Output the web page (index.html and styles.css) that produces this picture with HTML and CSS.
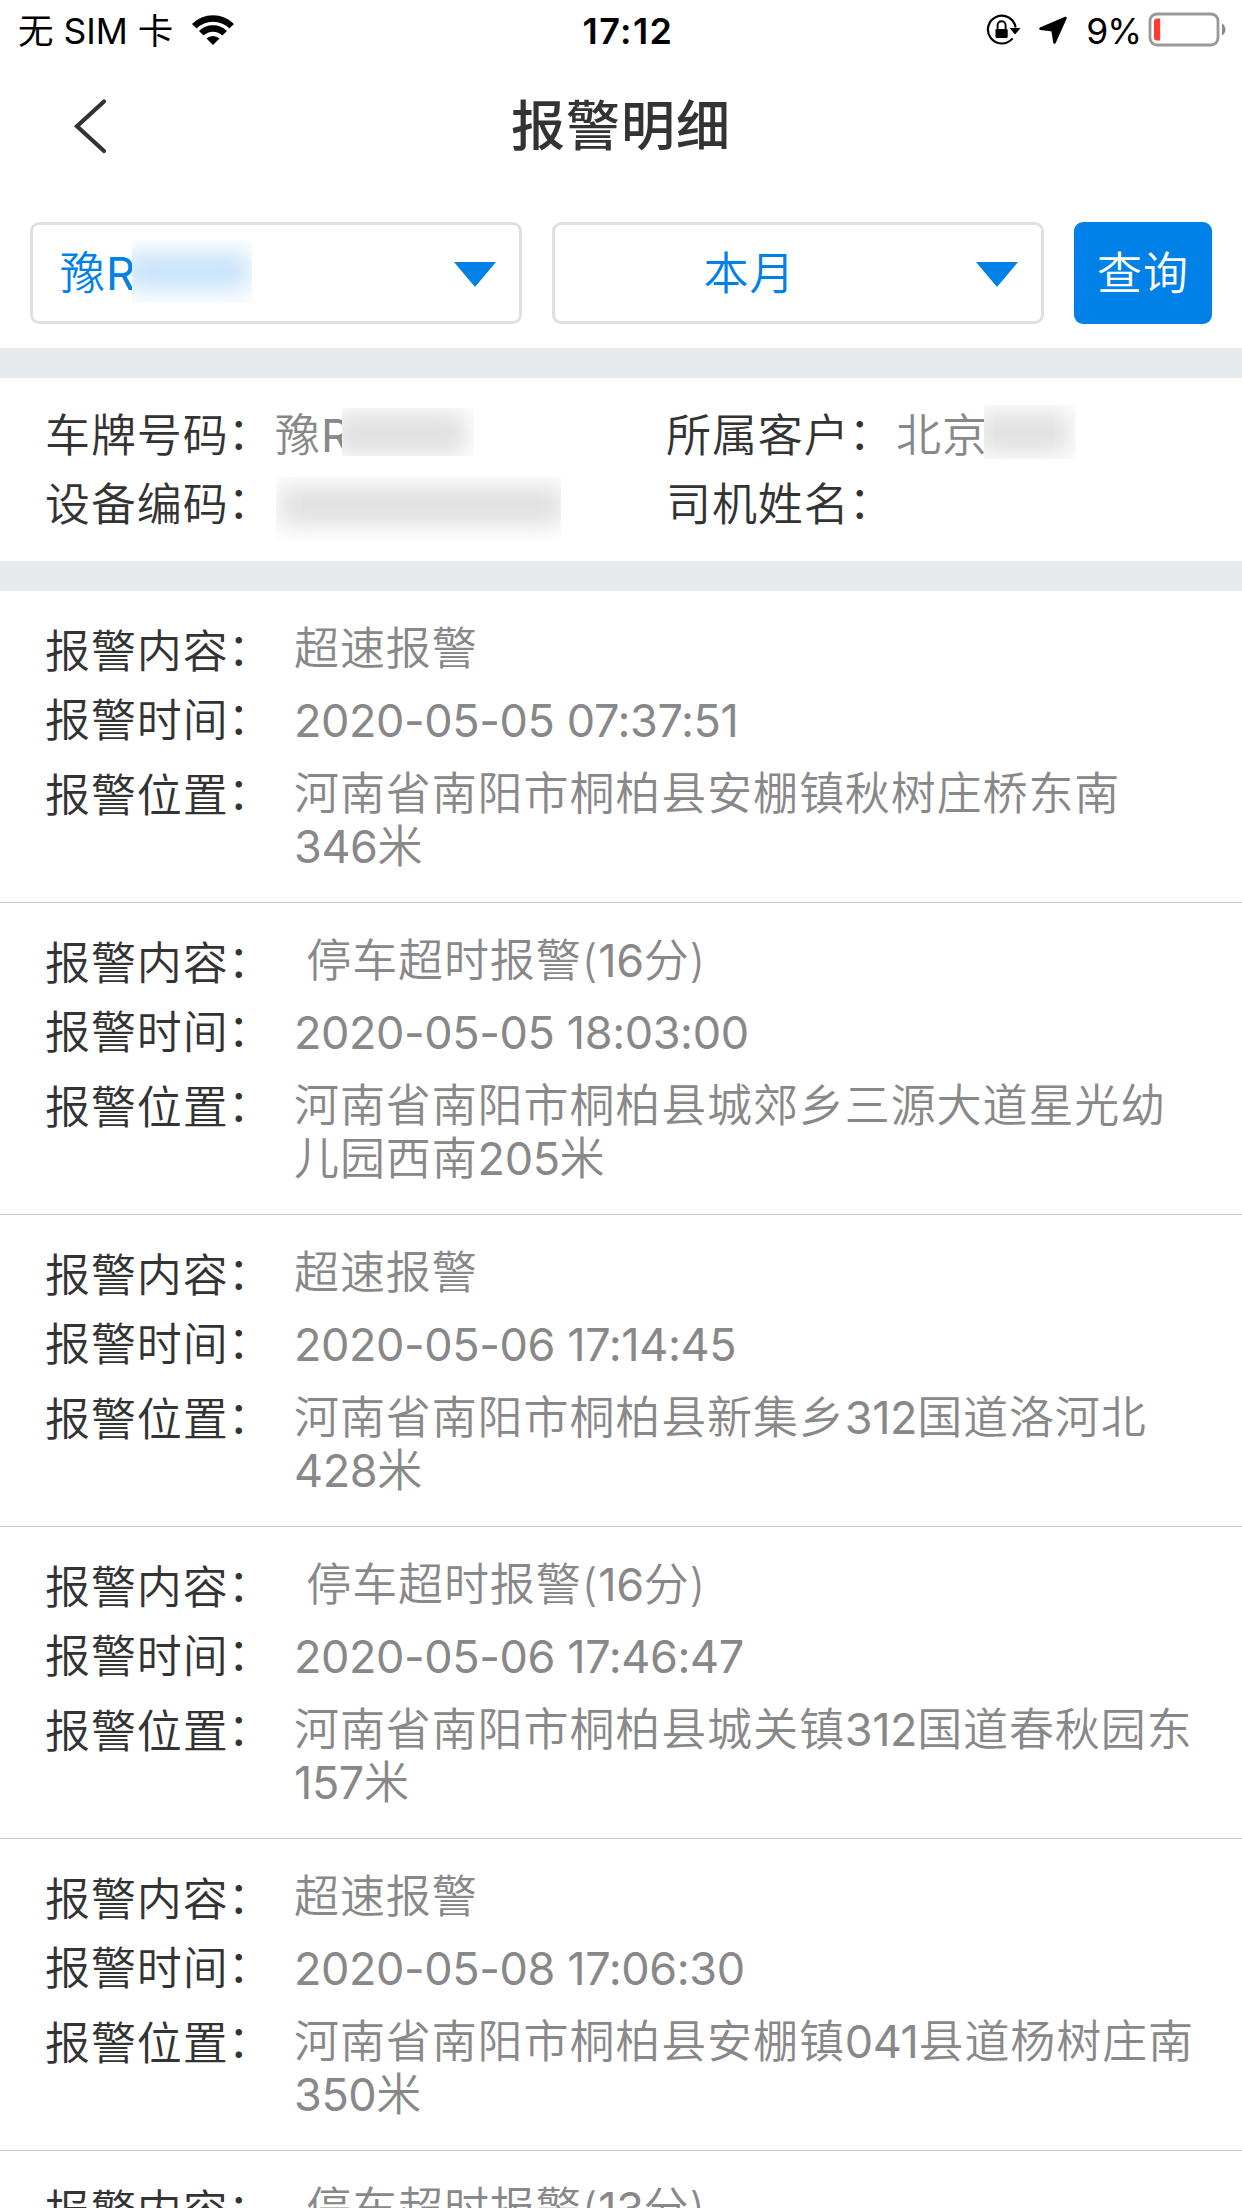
FILE: index.html
```html
<!DOCTYPE html>
<html lang="zh-CN">
<head>
    <meta charset="UTF-8">
    <meta name="viewport" content="width=device-width, initial-scale=1.0">
    <title>报警明细</title>
    <link rel="stylesheet" href="styles.css">
</head>
<body>
    <div class="statusbar">
        <div class="side">
            <div class="carrier">无 SIM 卡</div>
            <svg class="wifi" width="44" height="32" viewBox="0 0 44 32">
                <path d="M3.3 12.3A26.5 26.5 0 0 1 40.7 12.3M10.3 19.3A16.5 16.5 0 0 1 33.7 19.3" fill="none" stroke="#000" stroke-width="6.5"/>
                <path d="M22 31L15.5 24.5A9.5 9.5 0 0 1 28.5 24.5Z"/>
            </svg>
        </div>
        <div class="clock">17:12</div>
        <div class="side right">
            <svg class="lock" width="36" height="32" viewBox="0 0 36 32">
                <path d="M29.6 13.5A13.9 13.9 0 1 0 26.6 24.4" fill="none" stroke="#000" stroke-width="2.2"/>
                <path d="M23.5 14H34.5L29 20.6Z"/>
                <rect x="9.5" y="15" width="12.2" height="9" rx="1.2"/>
                <path d="M11.6 15.5V11.3a4 4 0 0 1 8 0V15.5" fill="none" stroke="#000" stroke-width="1.9"/>
            </svg>
            <svg class="arrow" width="30" height="30" viewBox="0 0 30 30">
                <path d="M27.5 3L2.5 13.8L14.6 15.2L16.5 27.5Z" stroke="#000" stroke-width="2.6" stroke-linejoin="round"/>
            </svg>
            <div class="percent">9%</div>
            <svg class="battery" width="80" height="36" viewBox="0 0 80 36">
                <rect x="2" y="2" width="68" height="31" rx="7" fill="none" stroke="#999" stroke-width="2.8"/>
                <path d="M74 11.5A7 7 0 0 1 74 23.5Z" fill="#888"/>
                <path d="M12.2 6.5V28.5H9a3 3 0 0 1-3-3V9.5a3 3 0 0 1 3-3Z" fill="#ff3b30"/>
            </svg>
        </div>
    </div>

    <div class="navbar">
        <svg class="back" width="40" height="60" viewBox="0 0 40 60">
            <path d="M34 5.5L7 30.2L34 55" fill="none" stroke="#333" stroke-width="4.2" stroke-linecap="round"/>
        </svg>
        <h1>报警明细</h1>
    </div>

    <div class="filter">
        <div class="select plate">豫<em>R</em><i class="mask mask-plate"></i><b class="caret"></b></div>
        <div class="select month">本月<b class="caret"></b></div>
        <div class="query">查询</div>
    </div>

    <div class="info">
        <div class="cell"><label>车牌号码<u>：</u></label><span>豫<em>R</em></span><i class="mask mask-no"></i></div>
        <div class="cell"><label>所属客户<u>：</u></label><span>北京</span><i class="mask mask-client"></i></div>
        <div class="cell"><label>设备编码<u>：</u></label><i class="mask mask-device"></i></div>
        <div class="cell"><label>司机姓名<u>：</u></label></div>
    </div>

    <div class="list">
        <div class="record">
            <div class="row what"><label>报警内容<u>：</u></label><span>超速报警</span></div>
            <div class="row when"><label>报警时间<u>：</u></label><span><em>2020-05-05 07:37:51</em></span></div>
            <div class="row where"><label>报警位置<u>：</u></label><span>河南省南阳市桐柏县安棚镇秋树庄桥东南<br><em>346</em>米</span></div>
        </div>
        <div class="record">
            <div class="row what"><label>报警内容<u>：</u></label><span><em>&nbsp;</em>停车超时报警(<em>16</em>分)</span></div>
            <div class="row when"><label>报警时间<u>：</u></label><span><em>2020-05-05 18:03:00</em></span></div>
            <div class="row where"><label>报警位置<u>：</u></label><span>河南省南阳市桐柏县城郊乡三源大道星光幼<br>儿园西南<em>205</em>米</span></div>
        </div>
        <div class="record">
            <div class="row what"><label>报警内容<u>：</u></label><span>超速报警</span></div>
            <div class="row when"><label>报警时间<u>：</u></label><span><em>2020-05-06 17:14:45</em></span></div>
            <div class="row where"><label>报警位置<u>：</u></label><span>河南省南阳市桐柏县新集乡<em>312</em>国道洛河北<br><em>428</em>米</span></div>
        </div>
        <div class="record">
            <div class="row what"><label>报警内容<u>：</u></label><span><em>&nbsp;</em>停车超时报警(<em>16</em>分)</span></div>
            <div class="row when"><label>报警时间<u>：</u></label><span><em>2020-05-06 17:46:47</em></span></div>
            <div class="row where"><label>报警位置<u>：</u></label><span>河南省南阳市桐柏县城关镇<em>312</em>国道春秋园东<br><em>157</em>米</span></div>
        </div>
        <div class="record">
            <div class="row what"><label>报警内容<u>：</u></label><span>超速报警</span></div>
            <div class="row when"><label>报警时间<u>：</u></label><span><em>2020-05-08 17:06:30</em></span></div>
            <div class="row where"><label>报警位置<u>：</u></label><span>河南省南阳市桐柏县安棚镇<em>041</em>县道杨树庄南<br><em>350</em>米</span></div>
        </div>
        <div class="record">
            <div class="row what"><label>报警内容<u>：</u></label><span><em>&nbsp;</em>停车超时报警(<em>13</em>分)</span></div>
        </div>
    </div>
</body>
</html>
```
FILE: styles.css
```css
* {box-sizing: border-box;}
body {margin: 0; height: 2208px; overflow: hidden; background: #fff; color: #333; font: 350 45px/53px Inter, "Noto Sans CJK SC", sans-serif; letter-spacing: 0.9px;}

/* status bar */
.statusbar {display: flex; height: 60px; padding: 0 14px 0 18px; color: #000; font-size: 35.5px; font-weight: 400; line-height: 63px; letter-spacing: 0;}
.side {flex: 1; display: flex;}
.right {justify-content: flex-end;}
.clock {padding-left: 10px; font-weight: 600; font-size: 36px; letter-spacing: 1.4px;}
.wifi {margin: 14px 0 0 18px;}
.lock {margin: 14px 16px 0 0;}
.arrow {margin: 15px 18px 0 0;}
.percent {margin-right: 7px; letter-spacing: -1px;}
.battery {margin-top: 12px;}

/* title */
.navbar {display: grid; grid-template-columns: 1fr auto 1fr; height: 132px;}
.back {margin: 36px 0 0 70px;}
h1 {margin: 31px 0 0; font-size: 54px; line-height: 72px; font-weight: 500; letter-spacing: 1px;}

/* filter */
.filter {display: flex; gap: 30px; height: 156px; padding: 30px 30px 24px;}
.select {position: relative; width: 492px; border: 3px solid #e0e0e0; border-radius: 9px; color: #0081e8; line-height: 98px;}
.plate {padding-left: 27px;}
.month {padding-right: 97px; text-align: center;}
.caret {position: absolute; right: 23px; top: 37px; border: 21px solid transparent; border-top: 25px solid #0081e8; border-bottom: 0;}
.query {width: 138px; border-radius: 9px; background: #0081e8; color: #fff; line-height: 104px; text-align: center;}

/* vehicle info */
.info {display: grid; grid-template-columns: 1fr 1fr; grid-auto-rows: 69px; height: 243px; padding-top: 31px; border: solid #e6eaed; border-width: 30px 0;}
.cell {position: relative; display: flex; padding-left: 45px;}
.cell label {width: 230px;}
label {flex: none; white-space: nowrap;}
span {color: #888;}
/* colon sits mid-height */
u {margin-left: -1px; vertical-align: 2px; line-height: 0; text-decoration: none;}
/* latin letters and digits */
em {font-style: normal; font-weight: 400; letter-spacing: -0.4px;}

/* blurred out values */
.mask {position: absolute; overflow: hidden; background: #fff;}
.mask::before {content: ""; position: absolute; background: #e0e0e0; filter: blur(12px);}
.mask-plate {left: 99px; top: 15px; width: 120px; height: 63px;}
.mask-plate::before {inset: 12px 2px 13px -8px; background: #c6e2f9;}
.mask-no {left: 342px; top: -1px; width: 132px; height: 48px;}
.mask-no::before {inset: 3px 8px 0 -6px;}
.mask-client {left: 363px; top: -4px; width: 92px; height: 54px;}
.mask-client::before {inset: 6px 6px 5px -6px;}
.mask-device {left: 276px; top: -1px; width: 285px; height: 63px;}
.mask-device::before {inset: 8px -2px 14px 3px;}

/* alarms */
.record {height: 312px; padding: 31px 0 0 45px; border-bottom: 1px solid #c8c8c8;}
.record:last-child {height: 58px; border: 0;}
.row {display: flex; white-space: nowrap;}
.row label {width: 249px;}
.what label {padding-top: 3px;}
.when {margin-top: 16px;}
.where {margin-top: 20px;}
.where label {padding-top: 2px;}
```
